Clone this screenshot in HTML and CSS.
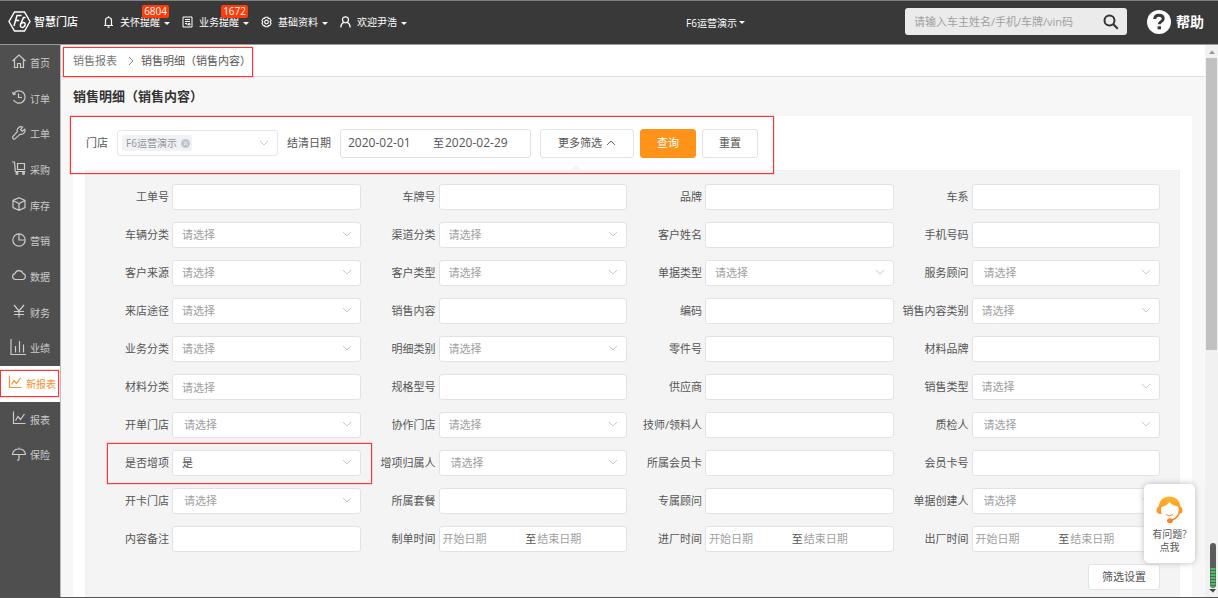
FILE: index.html
```html
<!DOCTYPE html>
<html lang="zh-CN">
<head>
<meta charset="utf-8">
<title>销售明细（销售内容）</title>
<link rel="stylesheet" href="styles.css">
</head>
<body>
<svg class="sprite" aria-hidden="true">
  <symbol id="down" viewBox="0 0 10 6"><path d="M1 1l4 4 4-4" fill="none" stroke="currentColor"/></symbol>
  <symbol id="up" viewBox="0 0 10 6"><path d="M1 5l4-4 4 4" fill="none" stroke="currentColor"/></symbol>
  <symbol id="chart" viewBox="0 0 14 14"><path d="M1.500 .5v12h12M3.500 9.500l2.500-4 2.500 3 4-5.500" fill="none" stroke="currentColor"/></symbol>
</svg>

<header class="topbar">
  <a class="brand" href="#">
    <svg width="23" height="21" viewBox="0 0 23 21" fill="none" stroke="#fff"><path d="M6.500 1h10l5.500 9.500-5.500 9.500h-10l-5.500-9.500z" stroke-width="1.400"/><path d="M6 15l3-10.500h4.500M7.200 9.500h4M17.500 6.500h-2l-3 7q-.5 3 1.700 3 2.200 0 2.900-2.600.4-2.400-1.600-2.400-1.500 0-2.300 1.300" stroke-width="1.500"/></svg>
    <span>智慧门店</span>
  </a>
  <nav class="topnav">
    <button class="topnav-item">
      <svg width="10" height="12" viewBox="0 0 10 12" fill="none" stroke="currentColor"><path d="M.5 9.500h9M2 9.500v-5a3 3 0 0 1 6 0v5M5 .2v1.300M4 11.200h2" stroke-width="1.200"/></svg>
      <span>关怀提醒</span><i class="caret"></i><b class="badge">6804</b>
    </button>
    <button class="topnav-item">
      <svg width="10" height="12" viewBox="0 0 10 12" fill="none" stroke="currentColor"><path d="M.5 1h9v10h-9zM2.500 3.500h5M2.500 5.500h5M2.500 7.500h2v1.500M6 7.500h1.500v1.500h-1.500z"/></svg>
      <span>业务提醒</span><i class="caret"></i><b class="badge">1672</b>
    </button>
    <button class="topnav-item">
      <svg width="12" height="12" viewBox="0 0 12 12" fill="none" stroke="currentColor" stroke-width="1.200"><path d="M4.500.8h3l.5 1.400 1.500-.2 1.500 2.500-1 1.500 1 1.500-1.500 2.500-1.500-.2-.5 1.400h-3l-.5-1.400-1.500.2-1.500-2.500 1-1.500-1-1.500 1.500-2.500 1.500.2z"/><circle cx="6" cy="6" r="2"/></svg>
      <span>基础资料</span><i class="caret"></i>
    </button>
    <button class="topnav-item">
      <svg width="11" height="12" viewBox="0 0 11 12" fill="none" stroke="currentColor" stroke-width="1.200"><circle cx="5.500" cy="3.800" r="3"/><path d="M3.800 6.300q-3 1.700-3 5.200M7.200 6.300q3 1.700 3 5.200"/></svg>
      <span>欢迎尹浩</span><i class="caret"></i>
    </button>
  </nav>
  <button class="store">F6运营演示<i class="caret"></i></button>
  <form class="search">
    <input type="text" aria-label="搜索" placeholder="请输入车主姓名/手机/车牌/vin码">
    <button type="button" aria-label="搜索"><svg width="16" height="16" viewBox="0 0 16 16" fill="none" stroke="#333" stroke-width="2"><circle cx="6.500" cy="6.500" r="5"/><path d="M10.300 10.300l4.500 4.500"/></svg></button>
  </form>
  <a class="help" href="#">
    <svg width="24" height="24" viewBox="0 0 24 24"><circle cx="12" cy="12" r="12" fill="#fff"/><path d="M7.700 9q.2-3.700 4.300-3.700 4.200 0 4.200 3.400 0 1.800-2.200 3-1.700.9-1.700 2.600" fill="none" stroke="#393939" stroke-width="3"/><path d="M10.600 16.300h3.400v3h-3.400z" fill="#393939"/></svg>
    <span>帮助</span>
  </a>
</header>

<div class="body">
  <nav class="side">
    <ul>
      <li><a href="#"><svg width="14" height="14" viewBox="0 0 14 14"><path d="M.5 7l6.500-6 6.500 6M2.500 5.500v8h3v-4h3v4h3v-8"/></svg><span>首页</span></a></li>
      <li><a href="#"><svg width="14" height="14" viewBox="0 0 14 14"><path d="M1.500 4a6.200 6.200 0 1 1 0 6M.5 2l1 2.500 2.500-.5M6.500 3.500v4h3.500"/></svg><span>订单</span></a></li>
      <li><a href="#"><svg width="14" height="14" viewBox="0 0 14 14"><path d="M12.800 3.200l-2.600 2-1.600-1.600 2-2.600a4 4 0 0 0-5.300 4.700l-4.500 5q-.5 1.200.4 2 .9.800 1.800.2l5-4.600a4 4 0 0 0 4.800-5.100z"/></svg><span>工单</span></a></li>
      <li><a href="#"><svg width="14" height="14" viewBox="0 0 14 14"><path d="M0 1h2.500l.8 9.500h10M5.500 2.500h7v6h-7z"/><circle cx="5" cy="12.300" r="1"/><circle cx="11.500" cy="12.300" r="1"/></svg><span>采购</span></a></li>
      <li><a href="#"><svg width="14" height="14" viewBox="0 0 14 14"><path d="M7 .7l6 2.800v7l-6 2.800-6-2.800v-7zM1 3.500l6 3 6-3M7 6.500v6.800"/></svg><span>库存</span></a></li>
      <li><a href="#"><svg width="14" height="14" viewBox="0 0 14 14"><circle cx="7" cy="7" r="6.200"/><path d="M7 .8v6.200h6"/></svg><span>营销</span></a></li>
      <li><a href="#"><svg width="14" height="14" viewBox="0 0 14 14"><path d="M3.300 11.500a3 3 0 0 1-.4-5.900 4.300 4.300 0 0 1 8.200 0 3 3 0 0 1-.4 5.900z"/></svg><span>数据</span></a></li>
      <li><a href="#"><svg width="14" height="14" viewBox="0 0 14 14"><path d="M2 1l5 6 5-6M7 7v6.500M2 7.500h10M2 10.500h10"/></svg><span>财务</span></a></li>
      <li><a href="#"><svg class="wide" width="16" height="16" viewBox="0 0 16 16"><path d="M1 0v15.500h15M5.500 7v6.500M9.500 2v11.500M13.500 5.500v8"/></svg><span>业绩</span></a></li>
      <li class="active"><a href="#"><svg width="14" height="14"><use href="#chart"/></svg><span>新报表</span></a></li>
      <li><a href="#"><svg width="14" height="14"><use href="#chart"/></svg><span>报表</span></a></li>
      <li><a href="#"><svg width="14" height="14" viewBox="0 0 14 14"><path d="M.5 7.500q.8-5.500 6.500-5.500 5.700 0 6.500 5.500zM7 .5v1.500M7 7.500v4.500q-.2 1.500-2 1.200"/></svg><span>保险</span></a></li>
    </ul>
  </nav>

  <main class="main">
    <div class="crumbs">
      <div class="crumbs-trail">
        <a href="#">销售报表</a>
        <svg width="6" height="10" viewBox="0 0 6 10"><path d="M1 1l4 4-4 4" fill="none" stroke="#888"/></svg>
        <span>销售明细（销售内容）</span>
      </div>
    </div>
    <h1>销售明细（销售内容）</h1>

    <section class="card">
      <form class="filters">
        <span class="filters-label">门店</span>
        <div class="tagbox">
          <span class="tag">F6运营演示<button type="button" aria-label="移除"><svg width="9" height="9" viewBox="0 0 9 9"><circle cx="4.500" cy="4.500" r="4.500" fill="#c0c4cc"/><path d="M2.800 2.800l3.400 3.400M6.200 2.800l-3.400 3.400" stroke="#f4f4f5"/></svg></button></span>
          <button type="button" class="tagbox-open" aria-label="展开门店"><svg width="10" height="6"><use href="#down"/></svg></button>
        </div>
        <label class="filters-label" for="from">结清日期</label>
        <div class="range range-lg">
          <input id="from" type="text" value="2020-02-01"><span>至</span><input type="text" aria-label="结清日期止" value="2020-02-29">
        </div>
        <div class="actions">
          <button type="button" class="btn more">更多筛选<svg width="10" height="6"><use href="#up"/></svg></button>
          <button type="button" class="btn primary">查询</button>
          <button type="button" class="btn">重置</button>
        </div>
      </form>

      <div class="panel">
        <svg class="notch" width="14" height="6" viewBox="0 0 14 6"><path d="M0 6l7-6 7 6z" fill="#f4f4f4"/></svg>
        <form class="grid">
          <div class="field"><label for="f1">工单号</label><input id="f1" type="text"></div>
          <div class="field"><label for="f2">车牌号</label><input id="f2" type="text"></div>
          <div class="field"><label for="f3">品牌</label><input id="f3" type="text"></div>
          <div class="field"><label for="f4">车系</label><input id="f4" type="text"></div>

          <div class="field"><label for="f5">车辆分类</label><select id="f5"><option>请选择</option></select><svg width="10" height="6"><use href="#down"/></svg></div>
          <div class="field"><label for="f6">渠道分类</label><select id="f6"><option>请选择</option></select><svg width="10" height="6"><use href="#down"/></svg></div>
          <div class="field"><label for="f7">客户姓名</label><input id="f7" type="text"></div>
          <div class="field"><label for="f8">手机号码</label><input id="f8" type="text"></div>

          <div class="field"><label for="f9">客户来源</label><select id="f9"><option>请选择</option></select><svg width="10" height="6"><use href="#down"/></svg></div>
          <div class="field"><label for="f10">客户类型</label><select id="f10"><option>请选择</option></select><svg width="10" height="6"><use href="#down"/></svg></div>
          <div class="field"><label for="f11">单据类型</label><select id="f11"><option>请选择</option></select><svg width="10" height="6"><use href="#down"/></svg></div>
          <div class="field multi"><label for="f12">服务顾问</label><select id="f12"><option>请选择</option></select><svg width="10" height="6"><use href="#down"/></svg></div>

          <div class="field"><label for="f13">来店途径</label><select id="f13"><option>请选择</option></select><svg width="10" height="6"><use href="#down"/></svg></div>
          <div class="field"><label for="f14">销售内容</label><input id="f14" type="text"></div>
          <div class="field"><label for="f15">编码</label><input id="f15" type="text"></div>
          <div class="field"><label for="f16">销售内容类别</label><select id="f16"><option>请选择</option></select><svg width="10" height="6"><use href="#down"/></svg></div>

          <div class="field"><label for="f17">业务分类</label><select id="f17"><option>请选择</option></select><svg width="10" height="6"><use href="#down"/></svg></div>
          <div class="field"><label for="f18">明细类别</label><select id="f18"><option>请选择</option></select><svg width="10" height="6"><use href="#down"/></svg></div>
          <div class="field"><label for="f19">零件号</label><input id="f19" type="text"></div>
          <div class="field"><label for="f20">材料品牌</label><input id="f20" type="text"></div>

          <div class="field"><label for="f21">材料分类</label><input id="f21" type="text" placeholder="请选择"></div>
          <div class="field"><label for="f22">规格型号</label><input id="f22" type="text"></div>
          <div class="field"><label for="f23">供应商</label><input id="f23" type="text"></div>
          <div class="field"><label for="f24">销售类型</label><select id="f24"><option>请选择</option></select><svg width="10" height="6"><use href="#down"/></svg></div>

          <div class="field multi"><label for="f25">开单门店</label><select id="f25"><option>请选择</option></select><svg width="10" height="6"><use href="#down"/></svg></div>
          <div class="field"><label for="f26">协作门店</label><select id="f26"><option>请选择</option></select><svg width="10" height="6"><use href="#down"/></svg></div>
          <div class="field"><label for="f27">技师/领料人</label><input id="f27" type="text"></div>
          <div class="field multi"><label for="f28">质检人</label><select id="f28"><option>请选择</option></select><svg width="10" height="6"><use href="#down"/></svg></div>

          <div class="field chosen"><label for="f29">是否增项</label><select id="f29"><option>是</option></select><svg width="10" height="6"><use href="#down"/></svg></div>
          <div class="field multi"><label for="f30">增项归属人</label><select id="f30"><option>请选择</option></select><svg width="10" height="6"><use href="#down"/></svg></div>
          <div class="field"><label for="f31">所属会员卡</label><input id="f31" type="text"></div>
          <div class="field"><label for="f32">会员卡号</label><input id="f32" type="text"></div>

          <div class="field multi"><label for="f33">开卡门店</label><select id="f33"><option>请选择</option></select><svg width="10" height="6"><use href="#down"/></svg></div>
          <div class="field"><label for="f34">所属套餐</label><input id="f34" type="text"></div>
          <div class="field"><label for="f35">专属顾问</label><input id="f35" type="text"></div>
          <div class="field multi"><label for="f36">单据创建人</label><select id="f36"><option>请选择</option></select><svg width="10" height="6"><use href="#down"/></svg></div>

          <div class="field"><label for="f37">内容备注</label><input id="f37" type="text"></div>
          <div class="field"><label for="f38">制单时间</label><div class="range"><input id="f38" type="text" placeholder="开始日期"><span>至</span><input type="text" aria-label="制单时间止" placeholder="结束日期"></div></div>
          <div class="field"><label for="f39">进厂时间</label><div class="range"><input id="f39" type="text" placeholder="开始日期"><span>至</span><input type="text" aria-label="进厂时间止" placeholder="结束日期"></div></div>
          <div class="field"><label for="f40">出厂时间</label><div class="range"><input id="f40" type="text" placeholder="开始日期"><span>至</span><input type="text" aria-label="出厂时间止" placeholder="结束日期"></div></div>
        </form>
        <div class="panel-foot"><button type="button" class="btn">筛选设置</button></div>
      </div>
    </section>
  </main>

  <div class="scroll" aria-hidden="true">
    <svg width="8" height="4" viewBox="0 0 8 4"><path d="M1 4l3-3.500 3 3.500z" fill="#999"/></svg>
    <div class="thumb"></div>
    <svg class="meter" width="9" height="50" viewBox="0 0 9 50"><rect x="1" width="6" height="45" rx="3" fill="#5c5c5c"/><path d="M4 25v19" stroke="#3cc55f" stroke-width="5" stroke-dasharray="2 1"/><path d="M0 46h7l-3 3.500z" fill="#444"/></svg>
  </div>
</div>

<a class="support" href="#">
  <svg width="27" height="27" viewBox="0 0 27 27"><defs><linearGradient id="hair" x2="0" y2="1"><stop stop-color="#ffb52c"/><stop offset="1" stop-color="#ff7a1c"/></linearGradient></defs><path d="M2.500 10.500q1.500-10 11-10t11 10q2 .8 2 3.500 0 3.300-2.800 3.800-1.700 4.800-6.700 6.700a3 2.500 0 1 1-.8-1.500q4.300-1.500 5.800-5.500 1.300-4 0-7-5.500-1-8.500-4.500-3 4-8 5-1 3.500.2 7-5.200.3-5.200-4 0-2.700 2-3.500z" fill="url(#hair)"/><path d="M10 18.500q3.500 3 7 0" fill="none" stroke="#ff8a1f"/></svg>
  <span>有问题?<br>点我</span>
</a>
</body>
</html>
```
FILE: styles.css
```css
*, ::before, ::after { box-sizing: border-box; }

body {
  margin: 0;
  height: 100vh;
  display: flex;
  flex-direction: column;
  overflow: hidden;
  border-top: 1px solid #808080;
  border-bottom: 1px solid #555;
  background: #f7f7f7;
  color: #555;
  font: 11px/16px "Open Sans", "Noto Sans CJK SC", sans-serif;
}

button, input, select { font: inherit; color: inherit; margin: 0; }
button { padding: 0; border: 0; background: none; white-space: nowrap; }
a { color: inherit; text-decoration: none; }
svg { display: block; flex: none; }
.sprite { position: absolute; width: 0; height: 0; }
::placeholder { color: #a0a0a0; opacity: 1; }

/* Top bar */
.topbar {
  flex: none;
  height: 44px;
  display: flex;
  align-items: center;
  padding: 0 14px 2px 8px;
  border-bottom: 1px solid #999;
  background: #393939;
  color: #fff;
}
.brand { display: flex; align-items: center; gap: 3px; font-weight: 500; }
.topnav { display: flex; gap: 12px; margin-left: 25px; font-size: 10px; }
.topnav-item { position: relative; display: flex; align-items: center; gap: 6px; }
.topnav-item svg { width: 11px; }
.caret {
  display: inline-block;
  border: 3px solid transparent;
  border-top-color: currentColor;
  border-bottom: 0;
}
.topnav-item .caret { margin: 3px 0 0 -2px; }
.badge {
  position: absolute;
  right: 1px;
  top: -9px;
  padding: 0 2px;
  border-radius: 2px;
  background: #ff3b0a;
  font: 10px/13px "Open Sans", sans-serif;
}
.store { display: flex; align-items: center; gap: 2px; margin: 2px 160px 0 auto; font-size: 10px; }
.search {
  display: flex;
  width: 222px;
  height: 27px;
  padding-right: 8px;
  border-radius: 3px;
  background: #ebebeb;
}
.search input { flex: 1; min-width: 0; padding: 0 9px; border: 0; background: none; outline: 0; }
.help { display: flex; align-items: center; gap: 5px; margin-left: 20px; font-size: 14px; font-weight: 700; }

/* Side menu */
.body { flex: 1; min-height: 0; display: flex; }
.side { flex: none; width: 61px; border-right: 1px solid #bbb; background: #4f4f4f; color: #ccc; font-size: 10px; }
.side ul { display: flex; flex-direction: column; height: 428px; margin: 0; padding: 0; list-style: none; }
.side li { flex: 1; display: flex; align-items: center; }
.side a { flex: 1; display: flex; align-items: center; gap: 4px; padding-left: 12px; white-space: nowrap; }
.side a svg { fill: none; stroke: currentColor; stroke-width: 1.2; margin-bottom: 3px; }
.side a .wide { margin-left: -2px; }
.side .active { background: #fff; color: #f7912e; }
.side .active a { height: 27px; margin-right: 1px; padding-left: 7px; border: 1px solid #f33; box-shadow: 0 0 1px #f33; }

/* Page */
.main { flex: 1; min-width: 0; }
.crumbs { display: flex; height: 32px; border-bottom: 1px solid #ddd; background: #fff; }
.crumbs-trail {
  position: relative;
  display: flex;
  align-items: center;
  gap: 11px;
  padding: 0 0 0 12px;
}
.crumbs-trail a { color: #777; }
.crumbs-trail svg { margin-right: -4px; }
.crumbs-trail::after, .filters::after, .chosen::after {
  content: "";
  position: absolute;
  border: 1px solid #f33;
  box-shadow: 0 0 1px #f33;
  pointer-events: none;
}
.crumbs-trail::after { inset: 2px -2px -1px 2px; }
h1 { margin: 0 12px; font-size: 13px; line-height: 39px; color: #333; }
.card { margin: 0 13px 0 12px; padding: 0 12px; background: #fff; }

/* Filter bar */
.filters { position: relative; display: flex; align-items: center; gap: 9px; height: 54px; padding-left: 1px; }
.filters::after { left: -15px; top: 0; width: 704px; height: 58px; z-index: 1; }
.filters-label { white-space: nowrap; }
.tagbox {
  display: flex;
  align-items: center;
  justify-content: space-between;
  width: 161px;
  height: 26px;
  padding: 0 8px 0 4px;
  border: 1px solid #e4e6ec;
  border-radius: 3px;
}
.tag {
  display: flex;
  align-items: center;
  gap: 4px;
  padding: 0 2px 0 4px;
  border-radius: 2px;
  background: #f0f2f5;
  color: #909399;
  font-size: 10px;
}
.tagbox-open, .field > svg { color: #c8cad2; }
.range {
  flex: 1;
  min-width: 0;
  display: flex;
  align-items: center;
  border: 1px solid #e2e2e6;
  border-radius: 3px;
  background: #fff;
}
.range input { flex: 1; width: 0; min-width: 0; padding: 0 0 0 3px; border: 0; background: none; outline: 0; }
.field .range input:first-child { flex: 0 0 46%; }
.range span + input { padding-left: 1px; }
.range-lg { flex: none; width: 191px; height: 29px; }
.range-lg input { padding-left: 7px; font-size: 12px; }
.actions { display: flex; gap: 6px; }
.btn {
  display: flex;
  align-items: center;
  justify-content: center;
  gap: 4px;
  height: 29px;
  padding: 0 16px;
  border: 1px solid #e2e3e8;
  border-radius: 3px;
  background: #fff;
}
.more { padding: 0 17px; }
.more svg { color: #666; }
.primary { border-color: #ff9319; background: #ff9319; color: #fff; }

/* Extended filters */
.panel { position: relative; height: 440px; padding: 13px 19px 0 8px; border: 1px solid #f0f0f0; background: #f4f4f4; }
.notch { position: absolute; left: 483px; top: -6px; }
.grid { display: grid; grid-template-columns: repeat(4, minmax(0, 1fr)); row-gap: 12px; }
.field { position: relative; display: flex; align-items: center; gap: 3px; height: 26px; }
.field label { flex: none; width: 75px; text-align: right; white-space: nowrap; }
.field > input, .field > select {
  flex: 1;
  width: 0;
  min-width: 0;
  height: 26px;
  padding: 0 9px;
  border: 1px solid #e2e2e6;
  border-radius: 3px;
  background: #fff;
  outline: 0;
}
.field > select { appearance: none; color: #a0a0a0; }
.field > svg { position: absolute; right: 9px; top: 9px; pointer-events: none; }
.field > .range { height: 26px; }
.multi > select { padding-left: 11px; }
.chosen > select { color: #555; }
.chosen::after { inset: -7px -11px -8px 13px; }
.panel-foot { display: flex; justify-content: flex-end; padding-top: 12px; }
.panel-foot .btn { height: 26px; padding: 0 13px; }

/* Scroll track */
.scroll { flex: none; width: 13px; display: flex; flex-direction: column; align-items: center; padding: 5px 0 4px; background: #f1f1f1; }
.thumb { width: 11px; height: 292px; margin-top: 4px; background: #c1c1c1; }
.meter { margin-top: auto; align-self: flex-end; }

/* Support card */
.support {
  position: absolute;
  right: 23px;
  bottom: 35px;
  display: flex;
  flex-direction: column;
  align-items: center;
  gap: 5px;
  width: 51px;
  height: 79px;
  padding-top: 12px;
  border-radius: 5px;
  background: #fff;
  box-shadow: 0 0 6px #bbb;
  font-size: 10px;
  line-height: 13px;
  text-align: center;
}
```
